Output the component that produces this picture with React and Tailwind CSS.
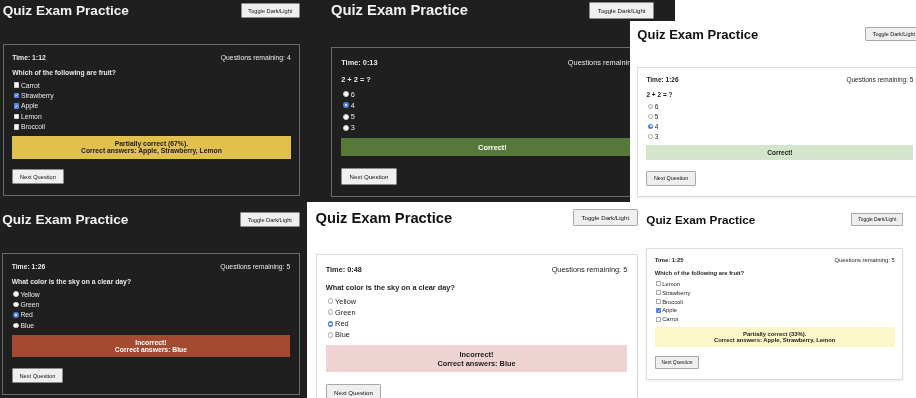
const PANELS = [
  {
    box: "left-0 top-0 w-[306px] h-[200px] text-[6.8px]",
    pad: "pl-[2.7px] pt-[3.2px]",
    dark: true,
    time: "1:12",
    left: 4,
    question: "Which of the following are fruit?",
    kind: "checkbox",
    options: [["Carrot"], ["Strawberry", true], ["Apple", true], ["Lemon"], ["Broccoli"]],
    result: "bg-[#e2c04e] text-[#1c1c1c]",
    lines: ["Partially correct (67%).", "Correct answers: Apple, Strawberry, Lemon"],
  },
  {
    box: "left-[306px] top-0 w-[369px] h-[202px] text-[7.38px]",
    pad: "pl-[25px] pt-[2px]",
    dark: true,
    time: "0:13",
    left: 4,
    question: "2 + 2 = ?",
    kind: "radio",
    options: [["6"], ["4", true], ["5"], ["3"]],
    result: "bg-[#56793a] text-white",
    lines: ["Correct!"],
  },
  {
    box: "left-[630px] top-[21px] w-[286px] h-[182px] text-[6.52px]",
    pad: "pl-[7.3px] pt-[5.6px]",
    dark: false,
    time: "1:26",
    left: 5,
    question: "2 + 2 = ?",
    kind: "radio",
    options: [["6"], ["5"], ["4", true], ["3"]],
    result: "bg-[#d5e5cb] text-[#1c1c1c]",
    lines: ["Correct!"],
  },
  {
    box: "left-0 top-[200px] w-[307px] h-[198px] text-[6.8px]",
    pad: "pl-[2.2px] pt-[12.2px]",
    dark: true,
    time: "1:26",
    left: 5,
    question: "What color is the sky on a clear day?",
    kind: "radio",
    options: [["Yellow"], ["Green"], ["Red", true], ["Blue"]],
    result: "bg-[#a34a31] text-white",
    lines: ["Incorrect!", "Correct answers: Blue"],
  },
  {
    box: "left-[307px] top-[202px] w-[333px] h-[196px] text-[7.36px]",
    pad: "pl-[8.5px] pt-[7.3px]",
    dark: false,
    time: "0:48",
    left: 5,
    question: "What color is the sky on a clear day?",
    kind: "radio",
    options: [["Yellow"], ["Green"], ["Red", true], ["Blue"]],
    result: "bg-[#efd3d3] text-[#1c1c1c]",
    lines: ["Incorrect!", "Correct answers: Blue"],
  },
  {
    box: "left-[640px] top-[200px] w-[276px] h-[198px] text-[5.87px]",
    pad: "pl-[6.3px] pt-[12.6px]",
    dark: false,
    time: "1:25",
    left: 5,
    question: "Which of the following are fruit?",
    kind: "checkbox",
    options: [["Lemon"], ["Strawberry"], ["Broccoli"], ["Apple", true], ["Carrot"]],
    result: "bg-[#fcf7c8] text-[#1c1c1c]",
    lines: ["Partially correct (33%).", "Correct answers: Apple, Strawberry, Lemon"],
  },
];

function PlainButton({ children, dark }) {
  return (
    <button
      className={`text-[0.8333em] leading-[normal] px-[1.2em] py-[0.62em] rounded-[0.2em] border bg-[#efefef] text-[#111] ${
        dark ? "border-[#8a8a8a]" : "border-[#a8a8a8]"
      }`}
    >
      {children}
    </button>
  );
}

// drawn stand-in for the native checkbox / radio
function Mark({ kind, on, dark }) {
  const shape = kind === "radio" ? "rounded-full" : "rounded-[0.12em]";
  if (on) {
    return (
      <span
        className={`inline-flex items-center justify-center w-[0.8125em] h-[0.8125em] ml-[0.25em] mr-[0.22em] shrink-0 bg-[#5580e6] ${shape}`}
      >
        {kind === "radio" ? (
          <span className="w-[0.3em] h-[0.3em] rounded-full bg-white" />
        ) : (
          <svg viewBox="0 0 10 10" className="w-[0.65em] h-[0.65em]">
            <path d="M2 5.2 4.2 7.3 8 2.8" fill="none" stroke="white" strokeWidth="1.6" />
          </svg>
        )}
      </span>
    );
  }
  return (
    <span
      className={`inline-block w-[0.8125em] h-[0.8125em] ml-[0.25em] mr-[0.22em] shrink-0 border bg-white ${shape} ${
        dark ? "border-[#d0d0d0]" : "border-[#a6a6a6]"
      }`}
    />
  );
}

function QuizShot({ p }) {
  return (
    <div
      className={`absolute overflow-hidden will-change-transform ${p.box} ${p.pad} ${
        p.dark ? "bg-[#1f1f1f] text-[#e8e8e8]" : "bg-white text-[#1e1e1e]"
      }`}
    >
      <div className="w-[43.75em] leading-[normal]">
        {/* header */}
        <div className="flex items-center justify-between">
          <h1 className={`text-[2em] font-bold leading-[normal] ${p.dark ? "text-[#f2f2f2]" : "text-[#111]"}`}>
            Quiz Exam Practice
          </h1>
          <PlainButton dark={p.dark}>Toggle Dark/Light</PlainButton>
        </div>

        {/* card */}
        <div
          className={`mt-[3.86em] border px-[1.25em] pt-[1.3em] pb-[1.6em] ${
            p.dark ? "border-[#6a6a6a]" : "border-[#dcdcdc] shadow-[0_0.1em_0.3em_rgba(0,0,0,0.08)]"
          }`}
        >
          <div className="flex justify-between mb-[1.19em]">
            <span className="font-bold">Time: {p.time}</span>
            <span>Questions remaining: {p.left}</span>
          </div>
          <div className="font-bold mb-[0.54em]">{p.question}</div>
          <div>
            {p.options.map(([label, on]) => (
              <div key={label} className="flex items-center h-[1.53em]">
                <Mark kind={p.kind} on={!!on} dark={p.dark} />
                <span>{label}</span>
              </div>
            ))}
          </div>
          <div className={`mt-[0.6em] py-[0.625em] text-center font-bold ${p.result}`}>
            {p.lines.map((l) => (
              <div key={l}>{l}</div>
            ))}
          </div>
          <div className="mt-[1.6em]">
            <PlainButton dark={p.dark}>Next Question</PlainButton>
          </div>
        </div>
      </div>
    </div>
  );
}

export default function App() {
  return (
    <div className="relative w-[916px] h-[398px] overflow-hidden bg-white font-['Liberation_Sans',Arial,sans-serif]">
      {PANELS.map((p, i) => (
        <QuizShot key={i} p={p} />
      ))}
    </div>
  );
}
